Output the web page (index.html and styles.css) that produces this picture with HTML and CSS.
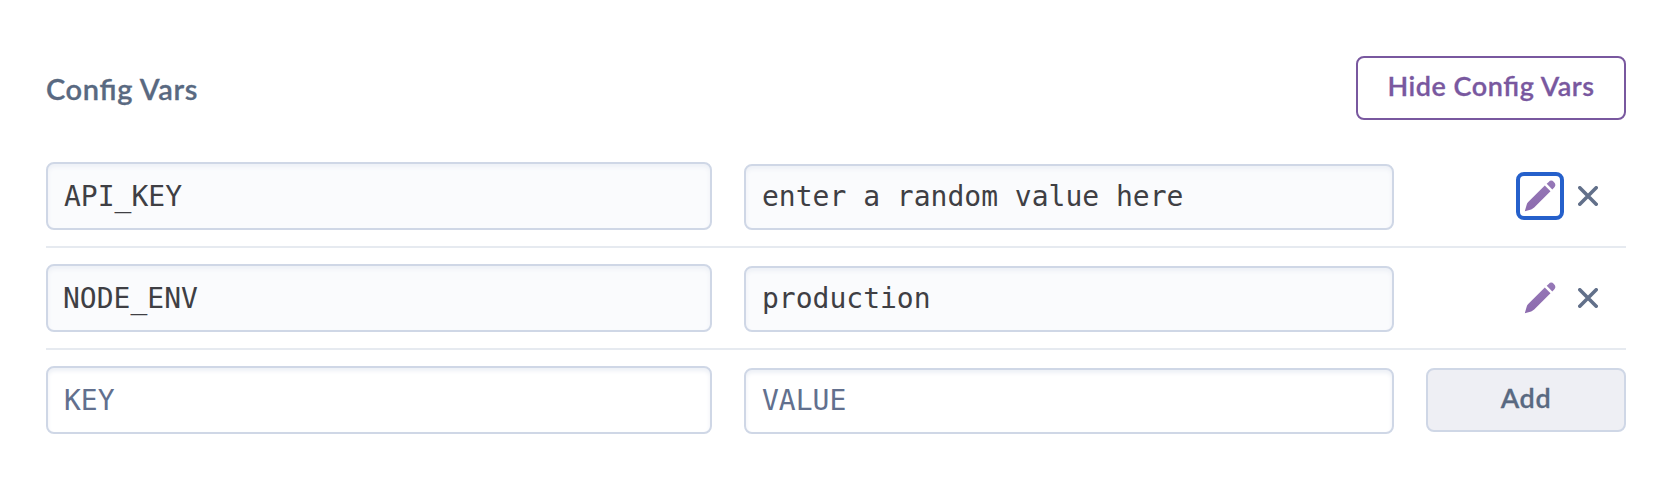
FILE: index.html
```html
<!DOCTYPE html>
<html lang="en">
<head>
<meta charset="utf-8">
<title>Config Vars</title>
<link rel="stylesheet" href="styles.css">
</head>
<body>
<svg class="defs" width="0" height="0">
  <defs>
    <linearGradient id="purple" x1="0" y1="0" x2="0" y2="1">
      <stop offset="0" stop-color="#9678b7"/>
      <stop offset="1" stop-color="#8c6bae"/>
    </linearGradient>
    <symbol id="pencil" viewBox="0 0 32 32">
      <path fill="url(#purple)" d="M.8 31.2 2.6 25Q3 23.2 4.2 22L20.8 5.6 26.5 11.3 10.2 27.6Q8.9 28.9 7.2 29.4ZM22.7 3.8 24.7 1.9Q27.2-.7 29.9 2 32.7 4.8 30.2 7.4L28.3 9.4Z"/>
    </symbol>
    <symbol id="cross" viewBox="0 0 20 20">
      <path d="M1.8 1.8 18.2 18.2M18.2 1.8 1.8 18.2" fill="none" stroke="#62708a" stroke-width="3.6" stroke-linecap="round"/>
    </symbol>
  </defs>
</svg>
<main class="config">
  <header class="header">
    <h2 class="title">Config Vars</h2>
    <button class="button hide">Hide Config Vars</button>
  </header>
  <div class="row">
    <div class="field key"><span>API_KEY</span></div>
    <div class="field value"><span>enter a random value here</span></div>
    <div class="actions">
      <button class="icon focused" aria-label="Edit"><svg class="pencil"><use href="#pencil"/></svg></button>
      <button class="icon" aria-label="Remove"><svg class="cross"><use href="#cross"/></svg></button>
    </div>
  </div>
  <div class="row">
    <div class="field key env"><span>NODE_ENV</span></div>
    <div class="field value"><span>production</span></div>
    <div class="actions">
      <button class="icon" aria-label="Edit"><svg class="pencil"><use href="#pencil"/></svg></button>
      <button class="icon" aria-label="Remove"><svg class="cross"><use href="#cross"/></svg></button>
    </div>
  </div>
  <div class="row">
    <div class="field key empty"><span>KEY</span></div>
    <div class="field value empty"><span>VALUE</span></div>
    <button class="button add">Add</button>
  </div>
</main>
</body>
</html>
```

FILE: styles.css
```css
* { box-sizing: border-box; }
body { margin: 0; background: #fff; font-family: Lato, sans-serif; font-feature-settings: "liga" 1; }
.defs { display: block; }
.config { padding: 56px 52px 0 46px; }
.header { display: flex; justify-content: space-between; align-items: flex-start; height: 90px; }
.title { margin: 0; padding-top: 16px; font-size: 29px; line-height: 34px; font-weight: 600; letter-spacing: .65px; color: #596981; -webkit-text-stroke: .3px #596981; }
.button { font-family: inherit; font-feature-settings: inherit; font-size: 27px; font-weight: 600; letter-spacing: .55px; line-height: 32px; height: 64px; padding: 0 0 4px; border-radius: 8px; white-space: nowrap; -webkit-text-stroke: .3px currentColor; }
.hide { width: 270px; border: 2px solid #79589f; background: #fff; color: #79589f; }
.row { display: grid; grid-template-columns: 666px 650px 200px; column-gap: 32px; height: 102px; padding: 16px 0; align-items: end; border-bottom: 2px solid #e6eaf0; }
.row:last-child { border-bottom-color: transparent; }
.field { display: flex; align-items: center; padding: 0 16px; border: 2px solid #cfd7e6; border-radius: 8px; background: #fafbfd; box-shadow: inset 0 3px 4px #edf0f6; font-family: "DejaVu Sans Mono", monospace; font-size: 28px; line-height: 34px; color: #3f3f44; white-space: pre; }
.key { height: 68px; padding-top: 2px; }
.env { padding-left: 15px; }
.value { height: 66px; }
.empty { background: #fff; color: #62708e; }
.actions { display: flex; justify-content: flex-end; align-items: center; height: 66px; padding: 0 14px 2px 0; }
.icon { display: grid; place-items: center; width: 48px; height: 48px; padding: 0; border: 4px solid transparent; border-radius: 8px; background: none; }
.focused { border-color: #2560cb; }
.pencil { width: 32px; height: 32px; }
.cross { width: 20px; height: 20px; }
.add { width: 200px; margin-bottom: 2px; border: 2px solid #cfd7e6; background: #eeeff4; color: #596981; }
```
